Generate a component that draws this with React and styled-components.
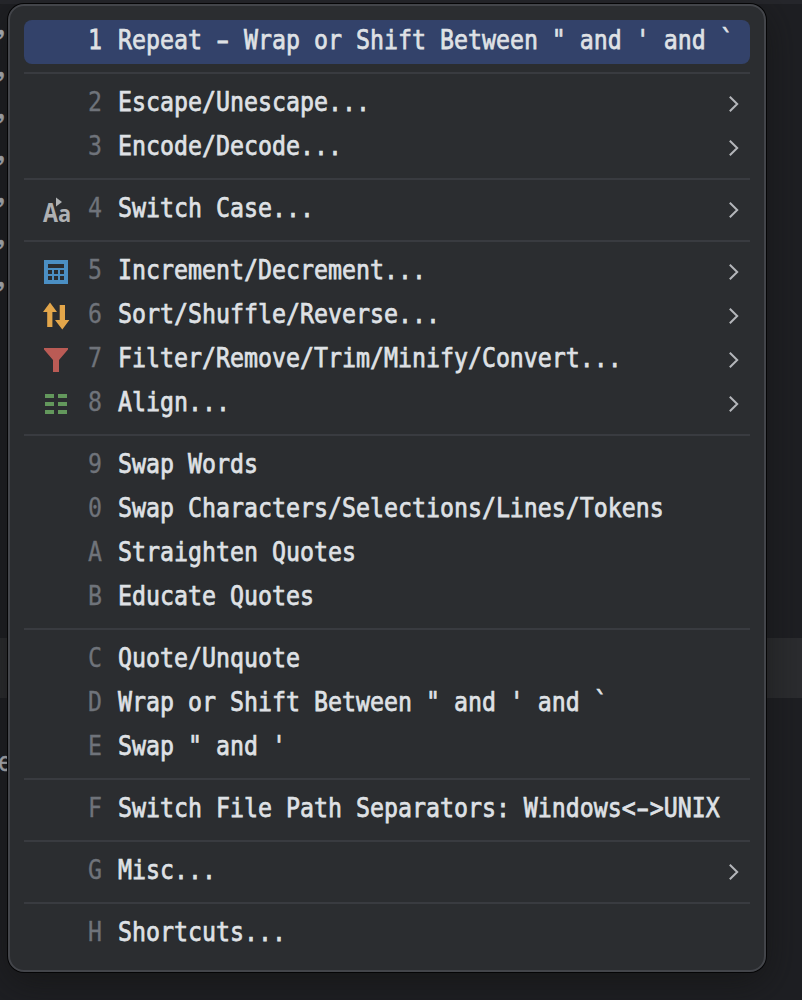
import React from "react";
import styled, { createGlobalStyle } from "styled-components";

const GlobalStyle = createGlobalStyle`
  * { box-sizing: border-box; }
  body { margin: 0; background: #1e1f22; overflow: hidden; }
`;

const Editor = styled.main`
  position: relative;
  width: 802px;
  height: 1000px;
  overflow: hidden;
  background: #1e1f23;
  padding: 4px 0 0 8px;
  font-family: "DejaVu Sans Mono", "Liberation Mono", monospace;
`;

const Backdrop = styled.div`
  position: absolute;
  inset: 0;
  display: flex;
  flex-direction: column;
`;

const TabEdge = styled.div`
  height: 4px;
  flex: none;
  background: #26272c;
`;

const CodeLines = styled.div`
  height: 634px;
  flex: none;
  padding-top: 6px;
`;

const CodeLine = styled.div`
  height: 42px;
  line-height: 42px;
  font-size: 27.4px;
  color: #bcbec4;
  -webkit-text-stroke: 0.5px #bcbec4;
  white-space: pre;
  width: 16.5px;
  transform-origin: left;
  transform: translateX(-2px) scaleX(0.849);
`;

const CommaLine = styled(CodeLine)`
  font-family: "Liberation Serif", serif;
  font-size: 38px;
  transform: translate(-3.5px, -10px);
`;

const CaretLine = styled.div`
  height: 60px;
  flex: none;
  background: #2b2c2f;
`;

const TrailingLines = styled.div`
  padding-top: 43px;
`;

const Menu = styled.div`
  position: relative;
  width: 758px;
  height: 968px;
  padding: 14px;
  border: 2px solid #43454a;
  border-radius: 16px;
  background: #2b2d30;
  box-shadow: 0 0 0 1px #050506, 0 10px 36px rgba(18, 18, 16, 0.6);
`;

const Separator = styled.div`
  height: 2px;
  margin: 8px 0;
  background: #393b40;
`;

const Item = styled.div`
  display: flex;
  align-items: center;
  height: 44px;
  padding: 0 9px 0 18px;
  border-radius: 8px;
  background: ${(p) => (p.$selected ? "#33426a" : "transparent")};
`;

const IconSlot = styled.span`
  display: flex;
  width: 28px;
  height: 28px;
  flex: none;
`;

const Mono = styled.span`
  display: block;
  font-size: 27.4px;
  line-height: 40px;
  height: 44px;
  white-space: pre;
  transform-origin: left;
  transform: scaleX(0.8487);
`;

const Mnemonic = styled(Mono)`
  width: 14px;
  margin-left: 18px;
  flex: none;
  color: ${(p) => (p.$selected ? "#dfe1e5" : "#6f737a")};
  -webkit-text-stroke: ${(p) => (p.$selected ? "0.8px" : "0.3px")} currentColor;
`;

const Label = styled(Mono)`
  flex: 1;
  min-width: 0;
  margin-left: 16px;
  color: #dfe1e5;
  -webkit-text-stroke: 0.75px #dfe1e5;
`;

const Dash = styled.span`
  display: inline-block;
  transform: scaleX(1.6);
`;

const Arrow = styled.svg`
  width: 14px;
  height: 20px;
  flex: none;
`;

const CaseText = styled.text`
  font-family: "Open Sans", "Noto Sans", sans-serif;
  font-weight: 700;
  fill: #afb1b3;
`;

function CaseIcon() {
  return (
    <svg width="28" height="28" viewBox="0 0 28 28" overflow="visible">
      <CaseText x="1" y="26" fontSize="27.5" textLength="15" lengthAdjust="spacingAndGlyphs">A</CaseText>
      <CaseText x="16" y="26" fontSize="23" textLength="13.2" lengthAdjust="spacingAndGlyphs">a</CaseText>
      <path d="M14 1.5 20 6 14 10.5Z" fill="#afb1b3" />
    </svg>
  );
}

function CalculatorIcon() {
  return (
    <svg width="28" height="28" viewBox="0 0 28 28" shapeRendering="crispEdges">
      <path
        fill="#4b8fc4"
        fillRule="evenodd"
        d="M2 2h24v24H2z M6 6v4h16V6z M6 12v4h4v-4z M12 12v4h4v-4z M18 12v4h4v-4z M6 18v4h4v-4z M12 18v4h4v-4z M18 18v4h4v-4z"
      />
    </svg>
  );
}

function SortIcon() {
  return (
    <svg width="28" height="28" viewBox="0 0 28 28">
      <path fill="#e3a64a" d="M8 0.5 15 10H10.4V25H5.2V10H1Z M17.7 3H23V18H27.4L20.3 27.5 13 18H17.7Z" />
    </svg>
  );
}

function FilterIcon() {
  return (
    <svg width="28" height="28" viewBox="0 0 28 28">
      <path fill="#ba5b55" d="M2 2H26V3.5L17 14V26H11V14L2 3.5Z" />
    </svg>
  );
}

function AlignIcon() {
  return (
    <svg width="28" height="28" viewBox="0 0 28 28" shapeRendering="crispEdges">
      <path fill="#63985c" d="M3 4h9v4H3z M16 4h9v4h-9z M3 12h9v4H3z M16 12h9v4h-9z M3 20h9v4H3z M16 20h9v4h-9z" />
    </svg>
  );
}

const groups = [
  [{ k: "1", label: "Repeat - Wrap or Shift Between \" and ' and `", selected: true }],
  [
    { k: "2", label: "Escape/Unescape...", sub: true },
    { k: "3", label: "Encode/Decode...", sub: true },
  ],
  [{ k: "4", label: "Switch Case...", sub: true, icon: CaseIcon }],
  [
    { k: "5", label: "Increment/Decrement...", sub: true, icon: CalculatorIcon },
    { k: "6", label: "Sort/Shuffle/Reverse...", sub: true, icon: SortIcon },
    { k: "7", label: "Filter/Remove/Trim/Minify/Convert...", sub: true, icon: FilterIcon },
    { k: "8", label: "Align...", sub: true, icon: AlignIcon },
  ],
  [
    { k: "9", label: "Swap Words" },
    { k: "0", label: "Swap Characters/Selections/Lines/Tokens" },
    { k: "A", label: "Straighten Quotes" },
    { k: "B", label: "Educate Quotes" },
  ],
  [
    { k: "C", label: "Quote/Unquote" },
    { k: "D", label: "Wrap or Shift Between \" and ' and `" },
    { k: "E", label: "Swap \" and '" },
  ],
  [{ k: "F", label: "Switch File Path Separators: Windows<->UNIX" }],
  [{ k: "G", label: "Misc...", sub: true }],
  [{ k: "H", label: "Shortcuts..." }],
];

function renderLabel(label) {
  return label.split("-").map((part, i) => (
    <React.Fragment key={i}>
      {i > 0 && <Dash>-</Dash>}
      {part}
    </React.Fragment>
  ));
}

function MenuItem({ item }) {
  const Icon = item.icon;
  return (
    <Item $selected={item.selected}>
      <IconSlot>{Icon && <Icon />}</IconSlot>
      <Mnemonic $selected={item.selected}>{item.k}</Mnemonic>
      <Label>{renderLabel(item.label)}</Label>
      {item.sub && (
        <Arrow viewBox="0 0 14 20">
          <path d="M2.8 2.8 10.2 10 2.8 17.2" fill="none" stroke="#b4b6ba" strokeWidth="2" />
        </Arrow>
      )}
    </Item>
  );
}

export default function App() {
  return (
    <Editor>
      <GlobalStyle />
      <Backdrop>
        <TabEdge />
        <CodeLines>
          {[0, 1, 2, 3, 4, 5, 6].map((n) => (
            <CommaLine key={n}>,</CommaLine>
          ))}
        </CodeLines>
        <CaretLine />
        <TrailingLines>
          <CodeLine>e</CodeLine>
        </TrailingLines>
      </Backdrop>
      <Menu>
        {groups.map((group, i) => (
          <React.Fragment key={i}>
            {i > 0 && <Separator />}
            {group.map((item) => (
              <MenuItem key={item.k} item={item} />
            ))}
          </React.Fragment>
        ))}
      </Menu>
    </Editor>
  );
}
